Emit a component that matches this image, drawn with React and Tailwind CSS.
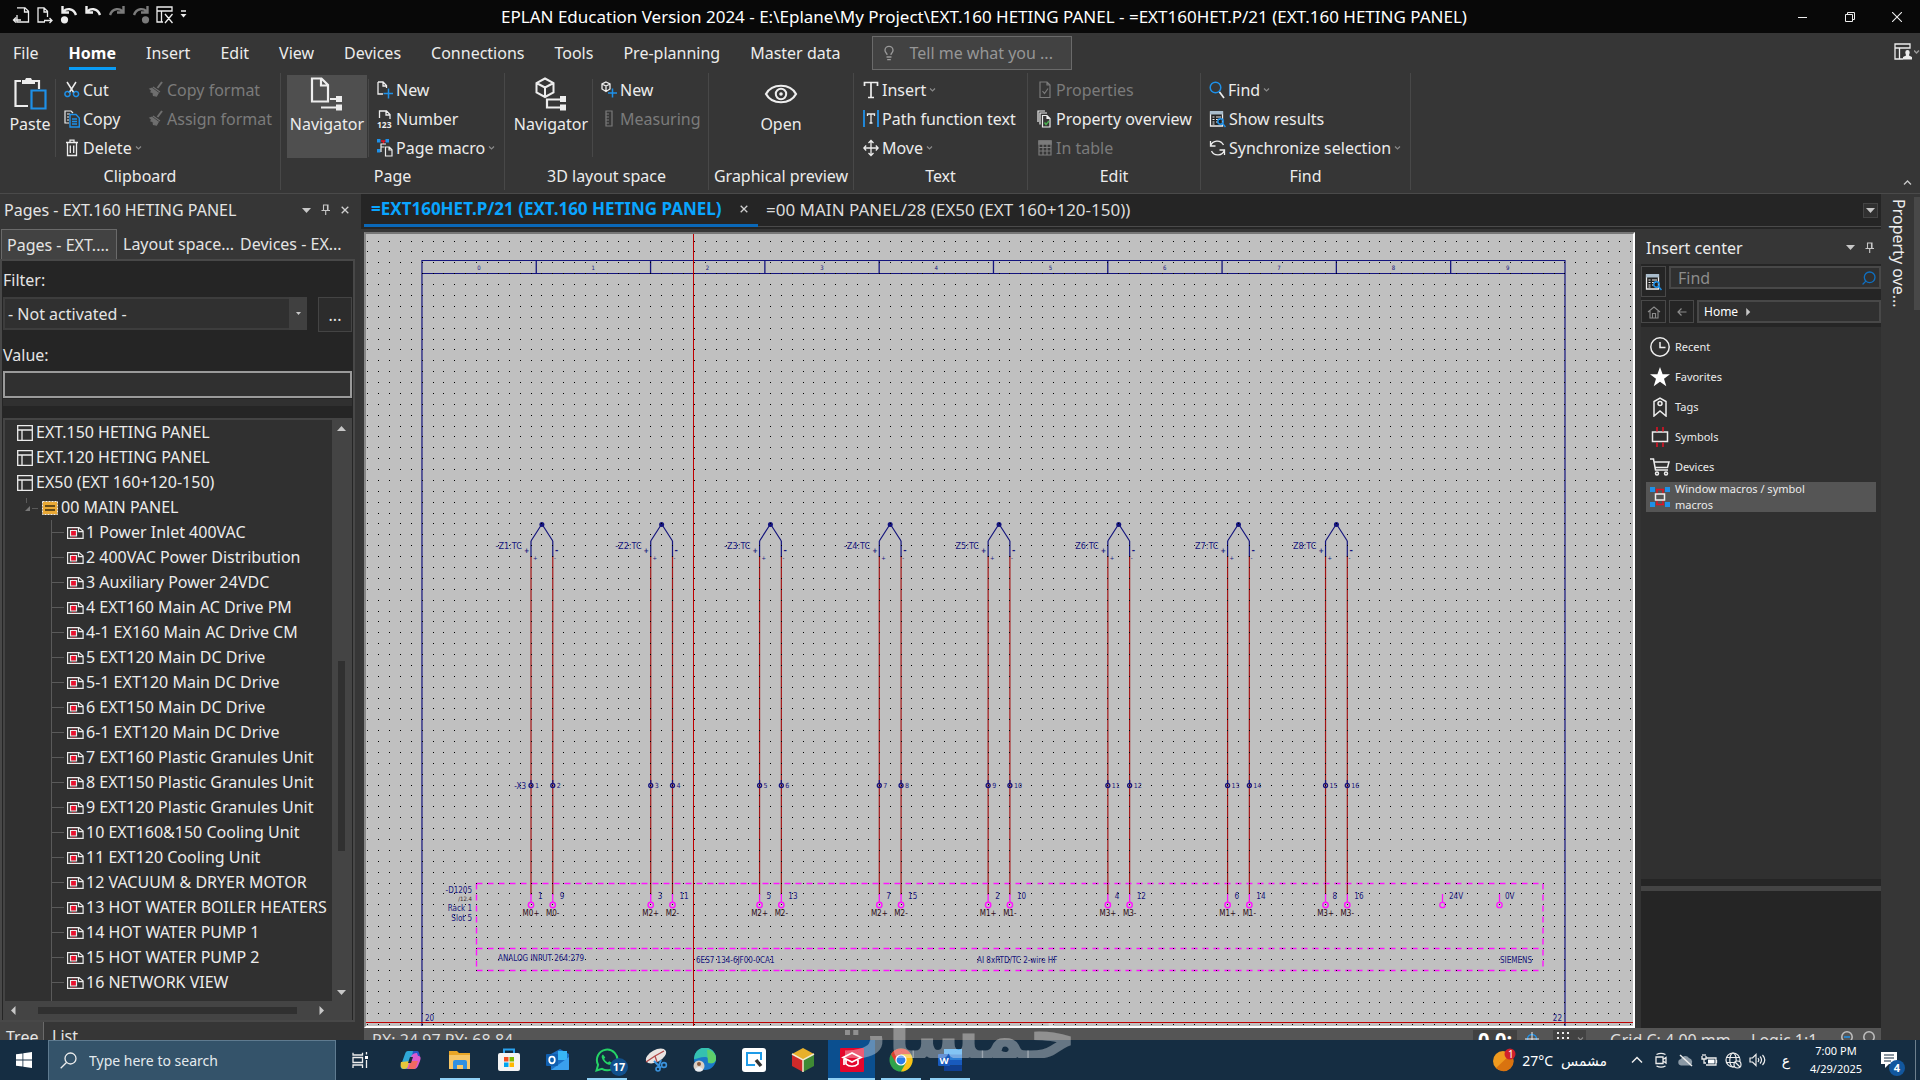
import React from "react";
import { LuLightbulb, LuSearch } from "react-icons/lu";

const FONT = "font-['Noto_Sans','Segoe_UI',sans-serif]";

/* ---------- icons ---------- */

function Svg({ w = 20, h = 20, box, children }) {
  return (
    <svg
      width={w}
      height={h}
      viewBox={box || `0 0 ${w} ${h}`}
      fill="none"
      stroke="#ededed"
      strokeWidth="1.5"
      className="shrink-0"
      aria-hidden="true"
    >
      {children}
    </svg>
  );
}

const PageBack = () => (
  <Svg w={18} h={18}>
    <path d="M5 1.8h8l3.5 3.5V16H5V9M12.5 2v4H16M9 14H1.5M4 11.500L1.500 14 4 16.500" strokeWidth="1.3" />
  </Svg>
);
const PageForward = () => (
  <Svg w={18} h={18}>
    <path d="M9 16H2V1.800h6l3.500 3.500V11M8 2v4h4M8 14.500h8M13.500 12l2.500 2.500-2.500 2.500" strokeWidth="1.3" />
  </Svg>
);
const Undo = ({ dim, flip, dot }) => (
  <Svg w={18} h={18}>
    <g transform={flip ? "translate(18 0) scale(-1 1)" : undefined} stroke={dim ? "#7b7b7b" : "#ededed"}>
      <path d="M2.500 0v6.500h6.500M3 6C6 2 13.500 1.500 16 9" strokeWidth="2.400" />
      {dot && <circle cx="4.500" cy="13.800" r="3.600" fill={dim ? "#7b7b7b" : "#ededed"} stroke="none" />}
    </g>
  </Svg>
);
const LayoutX = () => (
  <Svg w={18} h={18}>
    <path d="M1 1h15v4H1zM1 5v11h6M5.500 5v11M9 8l7.500 9M16.500 8L9 17" strokeWidth="1.3" />
  </Svg>
);
const LayoutUser = () => (
  <Svg w={20} h={18}>
    <path d="M1 1h15v4H1zM1 5v11h8M5.500 5v11" strokeWidth="1.3" />
    <path d="M13.500 7a2.200 2.200 0 012.200 2.200c0 1.500-.7 2-.7 3.300l3 1.500v2.500H9V14l3-1.500c0-1.300-.7-1.800-.7-3.300A2.200 2.200 0 0113.500 7z" fill="#ededed" stroke="none" />
  </Svg>
);
const Paste = () => (
  <Svg w={34} h={34}>
    <path d="M8 4H2.500v25H15M22 4h4v8" strokeWidth="2.200" />
    <path d="M9 3h3l1-2h5l1 2h3v4H9z" fill="#ededed" stroke="none" />
    <path d="M18.500 13.500h14v18h-14z" stroke="#1e90e8" strokeWidth="2.200" />
  </Svg>
);
const Cut = () => (
  <Svg w={16} h={18}>
    <path d="M3 1l7 11M12 1L5 12" />
    <path d="M6 12.500a2.500 2.500 0 11-5 1 2.500 2.500 0 015-1zM9.500 12.500a2.500 2.500 0 105 1 2.500 2.500 0 00-5-1z" stroke="#1e90e8" />
  </Svg>
);
const Copy = () => (
  <Svg w={16} h={18}>
    <path d="M5 13H1V1h6l2 2M3 4h3M3 7h2M3 10h2" strokeWidth="1.200" />
    <path d="M6 4.500h6L15.300 8v9H6zM8 9h5M8 11.500h5M8 14h5" stroke="#1e90e8" strokeWidth="1.400" />
  </Svg>
);
const Trash = () => (
  <Svg w={16} h={18}>
    <path d="M2 3.500h12M6 3V1.200h4V3M3.500 4v12.500h9V4M6.300 6.500v7.500M9.700 6.500v7.500" strokeWidth="1.300" />
  </Svg>
);
const Brush = () => (
  <Svg w={16} h={18}>
    <path d="M14 1L9.500 7" stroke="#6f6f6f" strokeWidth="2" />
    <path d="M5 6l7 5M4.500 7L2 8l1.500 1-.5 2 2 .5.500 3 3 .5 2-3.500" fill="#6f6f6f" stroke="#6f6f6f" strokeWidth="1.200" />
  </Svg>
);
const PageNavigator = () => (
  <Svg w={34} h={34}>
    <path d="M2 1.500h9.500L18 8v16.500H2zM11 2v6.500h7" strokeWidth="2.200" />
    <path d="M20 22h8M11 30.500h17" strokeWidth="2.200" />
    <path d="M26 19h6v6h-6zM26 27.500h6v6h-6z" fill="#ededed" stroke="none" />
  </Svg>
);
const CubeNavigator = () => (
  <Svg w={34} h={34}>
    <path d="M11 1.500l8.500 4.500v9.500L11 20l-8.500-4.500V6zM2.500 6l8.500 4.500L19.500 6M11 10.500V20" strokeWidth="2" />
    <path d="M27 22.500H13v8h14" strokeWidth="2.200" />
    <path d="M26 19h6v6h-6zM26 27.500h6v6h-6z" fill="#ededed" stroke="none" />
  </Svg>
);
const PageNew = () => (
  <Svg w={16} h={18}>
    <path d="M1 1h5l3.500 3.500V7M6 1v4h3M1 1v12h5" strokeWidth="1.300" />
    <path d="M11.500 7.500v10M6.500 12.500h10" stroke="#1e90e8" />
  </Svg>
);
const PageNumber = () => (
  <Svg w={16} h={18}>
    <path d="M2.500 8V1h7L13 4.500V9M9 1v4h4" strokeWidth="1.300" />
    <text x="0" y="17.500" fontSize="8.500" fontWeight="700" fill="#ededed" stroke="none">123</text>
  </Svg>
);
const PageMacro = () => (
  <Svg w={16} h={18}>
    <path d="M4 2h5M6.500 2v3" stroke="#e81123" />
    <path d="M0 0h3.500v3.500H0zM8.500 0H12v3.500H8.500zM0 10h3.500v3.500H0z" fill="#1e90e8" stroke="none" />
    <path d="M4 13V5h5M4.500 8h3M8.500 8h3.800L15 10.700V17H8.500zM12 8v3h3" strokeWidth="1.200" />
  </Svg>
);
const CubeNew = () => (
  <Svg w={16} h={18}>
    <path d="M5 1l4 2v5L5 10.500 1 8V3zM1 3l4 2 4-2M5 5v5" strokeWidth="1.300" />
    <path d="M11.500 7.500v9M7 12h9" stroke="#1e90e8" />
  </Svg>
);
const Ruler = () => (
  <Svg w={16} h={18}>
    <path d="M5 1h6v15H5zM5 4h3M5 7h3M5 10h3M5 13h3" stroke="#7b7b7b" strokeWidth="1.200" />
  </Svg>
);
const Eye = () => (
  <Svg w={34} h={34}>
    <path d="M2 17C8 6 26 6 32 17 26 28 8 28 2 17z" strokeWidth="2.200" />
    <circle cx="17" cy="17" r="5.200" strokeWidth="2" />
    <circle cx="17" cy="17" r="1.800" fill="#ededed" stroke="none" />
  </Svg>
);
const TextT = () => (
  <Svg w={16} h={18}>
    <path d="M1.500 5V1.500h13V5M8 1.500v15M5 16.500h6" strokeWidth="1.700" />
  </Svg>
);
const PathText = () => (
  <Svg w={16} h={18}>
    <path d="M1 0v17M15 0v17" stroke="#1e90e8" strokeWidth="1.800" />
    <path d="M4.500 6V4h7v2M8 4v9M6.500 13h3" strokeWidth="1.300" />
  </Svg>
);
const Move = () => (
  <Svg w={16} h={18}>
    <path d="M8 1.500v15M.8 9h14.400M5.500 4L8 1.500 10.500 4M5.500 14L8 16.500l2.500-2.500M3.200 6.500L.8 9l2.400 2.500M12.800 6.500L15.200 9l-2.400 2.500" strokeWidth="1.300" />
  </Svg>
);
const PageCheck = () => (
  <Svg w={16} h={18}>
    <path d="M3 1h7l3 3v12.500H3zM10 1v3h3M5.500 10l2 2.500 3.500-5" stroke="#7b7b7b" strokeWidth="1.200" />
  </Svg>
);
const PagesCheck = () => (
  <Svg w={16} h={18}>
    <path d="M1 12V1h7M3 14.500V3h7M5.500 5.500h4.500l3 3V17H5.500zM10 5.500v3h3" strokeWidth="1.200" />
    <path d="M7.500 12.500l1.500 2 3-3.500" stroke="#4caf50" />
  </Svg>
);
const TableIcon = () => (
  <Svg w={16} h={18}>
    <path d="M2 2h12v14H2zM2 8.500h12M2 12h12M6 4v12M10 4v12" stroke="#7b7b7b" strokeWidth="1.200" />
    <path d="M2 2h12v3H2z" fill="#7b7b7b" stroke="#7b7b7b" />
  </Svg>
);
const FindIcon = () => (
  <Svg w={16} h={18}>
    <circle cx="6.500" cy="6.500" r="5.300" stroke="#1e90e8" />
    <path d="M10.500 11l4.500 6" strokeWidth="1.700" />
  </Svg>
);
const Results = () => (
  <Svg w={17} h={18}>
    <path d="M1.500 2h12v14h-12z" fill="#222" strokeWidth="1.300" />
    <path d="M1 1h13v3.500H1z" fill="#a9bccb" stroke="none" />
    <path d="M3.500 7h2M7 7h5M3.500 9.500h2M7 9.500h4M3.500 12h2M7 12h2M3.500 14h2" strokeWidth="1.200" />
    <circle cx="11.500" cy="11.500" r="2.700" stroke="#1e90e8" />
    <path d="M13.500 13.500l3 3.500" stroke="#1e90e8" />
  </Svg>
);
const Sync = () => (
  <Svg w={17} h={18}>
    <path d="M1.500 7A7 7 0 0114.500 6M1.500 2v5h5M15.500 11A7 7 0 012.500 12M15.500 16v-5h-5" strokeWidth="1.300" />
  </Svg>
);
const PinIcon = () => (
  <Svg w={10} h={12}>
    <path d="M2.500 1h4.500v5.500H2.500zM6.500 1v5M.5 6.500h8.500M4.700 7v4" stroke="#c8c8c8" strokeWidth="1.100" />
  </Svg>
);
const CloseX = ({ size = 8 }) => (
  <Svg w={size} h={size} box="0 0 8 8">
    <path d="M.7.7l6.600 6.600M7.300.7L.7 7.300" stroke="#d0d0d0" strokeWidth="1.300" />
  </Svg>
);
const Triangle = ({ dir = "down", size = 9 }) => {
  const d = { down: "M0 2h9L4.500 7z", up: "M0 7h9L4.500 2z", left: "M6.500 0v9L2 4.500z", right: "M2.500 0v9L7 4.500z" }[dir];
  return (
    <Svg w={size} h={size} box="0 0 9 9">
      <path d={d} fill="#c8c8c8" stroke="none" />
    </Svg>
  );
};
const Caret = () => (
  <Svg w={8} h={6}>
    <path d="M1 1.500l2.500 2.500L6 1.500" stroke="#8a8a8a" strokeWidth="1.200" />
  </Svg>
);

/* ---------- title bar and ribbon ---------- */

function TitleBar() {
  return (
    <header className="flex h-[33px] shrink-0 items-center bg-[#080808] pl-3 text-white">
      <div className="flex flex-1 items-center gap-1.5 pb-1">
        <button aria-label="Previous page"><PageBack /></button>
        <button aria-label="Next page"><PageForward /></button>
        <button aria-label="Undo list"><Undo dot /></button>
        <button aria-label="Undo"><Undo /></button>
        <button aria-label="Redo"><Undo dim flip /></button>
        <button aria-label="Redo list"><Undo dim flip dot /></button>
        <button aria-label="Close layout"><LayoutX /></button>
        <button aria-label="Customize toolbar">
          <Svg w={7} h={9}><path d="M1 1h5" /><path d="M.5 4h6l-3 3.500z" fill="#ededed" stroke="none" /></Svg>
        </button>
      </div>
      <h1 className="ml-9 text-[17px] leading-6 whitespace-nowrap">
        EPLAN Education Version 2024 - E:\Eplane\My Project\EXT.160 HETING PANEL - =EXT160HET.P/21 (EXT.160 HETING PANEL)
      </h1>
      <div className="flex flex-1 justify-end">
        <button aria-label="Minimize" className="flex w-[47px] justify-center">
          <Svg w={10} h={10}><path d="M0 5.500h9" strokeWidth="1" /></Svg>
        </button>
        <button aria-label="Restore" className="flex w-[47px] justify-center">
          <Svg w={10} h={10}><path d="M.5 2.500h7v7h-7zM2.500 2.500v-2h7v7h-2" strokeWidth="1" /></Svg>
        </button>
        <button aria-label="Close" className="flex w-[47px] justify-center">
          <Svg w={10} h={10}><path d="M0 0l10 10M10 0L0 10" strokeWidth="1.100" /></Svg>
        </button>
      </div>
    </header>
  );
}

const MENU = ["File", "Home", "Insert", "Edit", "View", "Devices", "Connections", "Tools", "Pre-planning", "Master data"];

function MenuRow() {
  return (
    <div className="flex h-10 items-start justify-between">
      <nav className="flex h-[37px] gap-[30px] pl-[13px]">
        {MENU.map((m) => (
          <a
            key={m}
            href="#"
            className={
              m === "Home"
                ? "border-b-[3px] border-[#0a9cf5] pt-2 text-base leading-6 font-bold whitespace-nowrap text-white"
                : "pt-2 text-base leading-6 whitespace-nowrap"
            }
          >
            {m}
          </a>
        ))}
        <label className="mt-[3px] ml-0.5 flex h-[34px] w-[200px] items-center gap-3 border border-[#6a6a6a] bg-[#424242] pl-2">
          <LuLightbulb className="size-4 shrink-0 text-[#9a9a9a]" aria-hidden="true" />
          <input
            aria-label="Tell me what you want"
            placeholder="Tell me what you ..."
            className="min-w-0 flex-1 bg-transparent text-base outline-none placeholder:text-[#969696]"
          />
        </label>
      </nav>
      <button className="mt-2.5 flex items-center" aria-label="Workspace">
        <LayoutUser />
        <Svg w={6} h={6}><path d="M0 1.500l2.500 2.500L5 1.500" stroke="#999" /></Svg>
      </button>
    </div>
  );
}

function Cmd({ icon, label, dim, menu }) {
  return (
    <button className={`flex h-[29px] items-center gap-[3px] text-base whitespace-nowrap ${dim ? "text-[#7b7b7b]" : ""}`} disabled={dim}>
      {icon}
      {label}
      {menu && <Caret />}
    </button>
  );
}

function Big({ icon, label, active, width = "w-20" }) {
  return (
    <button className={`flex h-[83px] flex-col items-center ${width} ${active ? "bg-[#4f4f4f]" : ""}`}>
      <span className="mt-0.5">{icon}</span>
      <span className="text-base leading-[26px]">{label}</span>
    </button>
  );
}

function Group({ label, width, children }) {
  return (
    <section className={`flex h-[117px] shrink-0 flex-col border-r border-[#484848] ${width}`}>
      <div className="flex h-[89px] pt-0.5">{children}</div>
      <h2 className="text-center text-base leading-7 whitespace-nowrap">{label}</h2>
    </section>
  );
}

const Rule = () => <span className="mt-1 h-[78px] w-px shrink-0 bg-[#484848]" />;

function Ribbon() {
  return (
    <div className="flex h-[161px] shrink-0 flex-col border-b border-[#4a4a4a] bg-[#363636] text-[#ececec]">
      <MenuRow />
      <div className="flex">
        <Group label="Clipboard" width="w-[281px]">
          <div className="flex w-[55px] justify-end"><Big icon={<Paste />} label="Paste" width="w-[50px]" /></div>
          <Rule />
          <div className="ml-2 w-[84px]">
            <Cmd icon={<Cut />} label="Cut" />
            <Cmd icon={<Copy />} label="Copy" />
            <Cmd icon={<Trash />} label="Delete" menu />
          </div>
          <div>
            <Cmd icon={<Brush />} label="Copy format" dim />
            <Cmd icon={<Brush />} label="Assign format" dim />
          </div>
        </Group>
        <Group label="Page" width="w-[224px]">
          <div className="pl-1.5"><Big icon={<PageNavigator />} label="Navigator" active /></div>
          <span className="w-px" />
          <Rule />
          <div className="ml-2">
            <Cmd icon={<PageNew />} label="New" />
            <Cmd icon={<PageNumber />} label="Number" />
            <Cmd icon={<PageMacro />} label="Page macro" menu />
          </div>
        </Group>
        <Group label="3D layout space" width="w-[204px]">
          <div className="pl-1.5"><Big icon={<CubeNavigator />} label="Navigator" /></div>
          <span className="w-px" />
          <Rule />
          <div className="ml-2">
            <Cmd icon={<CubeNew />} label="New" />
            <Cmd icon={<Ruler />} label="Measuring" dim />
          </div>
        </Group>
        <Group label="Graphical preview" width="w-[145px]">
          <div className="flex flex-1 justify-center"><Big icon={<Eye />} label="Open" /></div>
        </Group>
        <Group label="Text" width="w-[174px]">
          <div className="ml-[9px]">
            <Cmd icon={<TextT />} label="Insert" menu />
            <Cmd icon={<PathText />} label="Path function text" />
            <Cmd icon={<Move />} label="Move" menu />
          </div>
        </Group>
        <Group label="Edit" width="w-[173px]">
          <div className="ml-[9px]">
            <Cmd icon={<PageCheck />} label="Properties" dim />
            <Cmd icon={<PagesCheck />} label="Property overview" />
            <Cmd icon={<TableIcon />} label="In table" dim />
          </div>
        </Group>
        <Group label="Find" width="w-[210px]">
          <div className="ml-2">
            <Cmd icon={<FindIcon />} label="Find" menu />
            <Cmd icon={<Results />} label="Show results" />
            <Cmd icon={<Sync />} label="Synchronize selection" menu />
          </div>
        </Group>
        <button className="mt-auto mr-2 mb-1 ml-auto" aria-label="Collapse ribbon">
          <Svg w={9} h={7}><path d="M1 5.500L4.500 2 8 5.500" stroke="#c8c8c8" strokeWidth="1.300" /></Svg>
        </button>
      </div>
    </div>
  );
}

/* ---------- pages navigator ---------- */

const PROJECTS = ["EXT.150 HETING PANEL", "EXT.120 HETING PANEL", "EX50 (EXT 160+120-150)"];
const PAGES = [
  "1 Power Inlet 400VAC",
  "2 400VAC Power Distribution",
  "3 Auxiliary Power 24VDC",
  "4 EXT160 Main AC Drive PM",
  "4-1 EX160 Main AC Drive CM",
  "5 EXT120 Main DC Drive",
  "5-1 EXT120 Main DC Drive",
  "6 EXT150 Main DC Drive",
  "6-1 EXT120 Main DC Drive",
  "7 EXT160 Plastic Granules Unit",
  "8 EXT150 Plastic Granules Unit",
  "9 EXT120 Plastic Granules Unit",
  "10 EXT160&150 Cooling Unit",
  "11 EXT120 Cooling Unit",
  "12 VACUUM & DRYER MOTOR",
  "13 HOT WATER BOILER HEATERS",
  "14 HOT WATER PUMP 1",
  "15 HOT WATER PUMP 2",
  "16 NETWORK VIEW",
];

const ProjectIcon = () => (
  <Svg w={16} h={16}>
    <path d="M.7.7h14.600v14.600H.7zM.7 5h14.600M5 5v10" strokeWidth="1.300" />
  </Svg>
);
const PlantIcon = () => (
  <Svg w={16} h={14}>
    <path d="M.5.500h15v13H.5z" fill="#eaa935" strokeWidth="1" strokeDasharray="2 1" />
    <path d="M3 5h10M3 9h10" stroke="#3a2c10" strokeWidth="1.300" />
  </Svg>
);
const SchematicIcon = () => (
  <Svg w={17} h={12}>
    <path d="M.6.600h11.500l4 3.500v7.300H.6zM11.500.6v4h4.500" strokeWidth="1.200" />
    <path d="M3.500 3.500h6v5.500h-6z" fill="#e8112d" strokeWidth="1.200" />
    <path d="M5.500 1.500v1M8 1.500v1M5.500 10v1M8 10v1" stroke="#e8112d" strokeWidth="1" />
  </Svg>
);

function PageTree() {
  return (
    <div className="flex min-h-0 flex-1 flex-col border-2 border-b-0 border-[#444] bg-[#444]">
      <div className="flex min-h-0 flex-1">
        <ul className="min-w-0 flex-1 overflow-hidden bg-[#303030] text-base leading-[25px] whitespace-nowrap text-[#ececec]">
          {PROJECTS.map((p) => (
            <li key={p} className="flex h-[25px] items-center gap-[3px] pl-3"><ProjectIcon />{p}</li>
          ))}
          <li>
            <div className="flex h-[25px] items-center gap-[3px] pl-5">
              <Svg w={14} h={20}>
                <path d="M1.500 0v5M7 10.500h6" stroke="#5a5a5a" strokeWidth="1" />
                <path d="M5 8v5H0z" fill="#777" stroke="none" />
              </Svg>
              <PlantIcon />00 MAIN PANEL
            </div>
            <ul className="ml-[46px] border-l border-[#5a5a5a]">
              {PAGES.map((p) => (
                <li key={p} className="flex h-[25px] items-center gap-0.5">
                  <span className="mr-px h-px w-3 shrink-0 bg-[#5a5a5a]" />
                  <SchematicIcon />{p}
                </li>
              ))}
              <li className="h-[25px] pl-[122px]">¨</li>
            </ul>
          </li>
        </ul>
        <div className="flex w-[18px] shrink-0 flex-col items-center py-1">
          <Triangle dir="up" />
          <div className="min-h-0 flex-[229]" />
          <div className="min-h-0 w-[7px] flex-[191] bg-[#303030]" />
          <div className="min-h-0 flex-[137]" />
          <Triangle />
        </div>
      </div>
      <div className="flex h-[19px] shrink-0 items-center gap-5 px-1">
        <Triangle dir="left" />
        <div className="h-[7px] flex-1 bg-[#303030]" />
        <span className="pr-5"><Triangle dir="right" /></span>
      </div>
    </div>
  );
}

function PagesPanel() {
  return (
    <aside className="flex w-[361px] shrink-0 flex-col bg-[#363636] pr-1.5 text-base text-[#e4e4e4]">
      <div className="flex h-[35px] shrink-0 items-center justify-between pr-1.5 pb-[3px] pl-1">
        <h2>Pages - EXT.160 HETING PANEL</h2>
        <div className="flex items-center gap-2.5">
          <button aria-label="Panel menu"><Triangle /></button>
          <button aria-label="Pin panel"><PinIcon /></button>
          <button aria-label="Close panel"><CloseX /></button>
        </div>
      </div>
      <div className="flex h-[30px] shrink-0 items-center whitespace-nowrap">
        <button className="ml-px h-[30px] w-[116px] border border-b-0 border-[#6a6a6a] bg-[#424242] pl-[5px] text-left">Pages - EXT....</button>
        <button className="w-[117px] pl-1.5 text-left">Layout space...</button>
        <button className="w-[116px] pl-1.5 text-left">Devices - EX...</button>
      </div>
      <div className="flex min-h-0 flex-1 flex-col border-2 border-[#484848] bg-[#252525] px-px">
        <label htmlFor="filter" className="mt-[5px] mb-0.5 h-[29px] leading-[29px]">Filter:</label>
        <div className="flex justify-between">
          <div className="relative h-[33px] w-[304px]">
            <select id="filter" className="h-full w-full appearance-none border-2 border-[#3d3d3d] bg-[#303030] pl-[3px] outline-none">
              <option>- Not activated -</option>
            </select>
            <span className="pointer-events-none absolute inset-y-0 right-0 flex w-[18px] items-center justify-center bg-[#404040]"><Triangle size={5} /></span>
          </div>
          <button className="h-[35px] w-[34px] border border-[#444] bg-[#2c2c2c]" aria-label="Edit filter">...</button>
        </div>
        <label htmlFor="value" className="mt-2 h-[31px] leading-[31px]">Value:</label>
        <input id="value" className="h-[27px] w-full shrink-0 border-2 border-[#9a9a9a] bg-[#303030] outline-none" />
        <div className="mt-px mb-3 h-[7px] shrink-0 bg-[#303030]" />
        <PageTree />
      </div>
      <div className="flex h-[18px] shrink-0 items-start overflow-hidden leading-7">
        <button className="-mt-px h-8 w-11 border-r border-[#6a6a6a] bg-[#444] pl-1.5 text-left leading-8">Tree</button>
        <button className="pl-2">List</button>
      </div>
    </aside>
  );
}

/* ---------- schematic ---------- */

const GRID = 10.884;
const X0 = 1.75;
const Y0 = 7.1;
const gx = (n) => X0 + n * GRID;

// one path for the whole dot grid, snapped to device pixels
const DOTS = (() => {
  let d = "";
  for (let r = 0; r < 110; r++)
    for (let c = 0; c < 240; c++) d += `M${Math.floor(X0 + c * GRID)} ${Math.floor(Y0 + r * 10.88)}h1v1h-1z`;
  return d;
})();

const SENSORS = [
  { at: 16, name: "-Z1:TC", t: [1, 2], p: [1, 9], m: "M0" },
  { at: 27, name: "-Z2:TC", t: [3, 4], p: [3, 11], m: "M2" },
  { at: 37, name: "-Z3:TC", t: [5, 6], p: [5, 13], m: "M2" },
  { at: 48, name: "-Z4:TC", t: [7, 8], p: [7, 15], m: "M2" },
  { at: 58, name: "Z5:TC", t: [9, 10], p: [2, 10], m: "M1" },
  { at: 69, name: "Z6:TC", t: [11, 12], p: [4, 12], m: "M3" },
  { at: 80, name: "Z7:TC", t: [13, 14], p: [6, 14], m: "M1" },
  { at: 89, name: "Z8:TC", t: [15, 16], p: [8, 16], m: "M3" },
];

function Wire({ x, t, p, m }) {
  return (
    <g>
      <path d={`M${x} 322V661`} stroke="#a31515" strokeWidth="1.200" />
      <path d={`M${x} 307V323M${x} 546V549`} stroke="#14147d" strokeWidth="1.200" />
      <circle cx={x} cy="551.500" r="2" fill="none" stroke="#14147d" strokeWidth="1.300" />
      <text x={x + 4} y="554" fontSize="7">{t}</text>
      <path d={`M${x} 660V668`} stroke="#ff14ff" strokeWidth="1.300" />
      <circle cx={x} cy="671" r="2.700" fill="none" stroke="#ff14ff" strokeWidth="1.400" />
      <text x={x + 7} y="665">{p}</text>
      <text x={x} y="682" textAnchor="middle" fill="#2e0a14">{m}</text>
    </g>
  );
}

function Sensor({ at, name, t, p, m }) {
  const x = gx(at);
  return (
    <g>
      <circle cx={x} cy="290.500" r="2.500" fill="#14147d" />
      <path d={`M${x - GRID} 307L${x} 290L${x + GRID} 307`} fill="none" stroke="#14147d" strokeWidth="1.200" />
      <text x={x - 20} y="315" fontSize="9" textAnchor="end">{name}</text>
      <text x={x - 18} y="319" fontSize="7" fontWeight="700">+</text>
      <text x={x - 9} y="326" fontSize="6">+</text>
      <text x={x + 13} y="319" fontSize="9" fontWeight="700">-</text>
      <text x={x + 12} y="326" fontSize="6">-</text>
      <Wire x={x - GRID} t={t[0]} p={p[0]} m={`${m}+`} />
      <Wire x={x + GRID} t={t[1]} p={p[1]} m={`${m}-`} />
    </g>
  );
}

function Schematic() {
  const left = gx(5) - 0.2;
  const right = 1199;
  return (
    <svg
      className="block h-full w-full font-['DejaVu_Sans_Condensed','DejaVu_Sans',sans-serif]"
      fill="none"
      role="img"
      aria-label="Schematic page 21"
    >
      <path d={`M${left} 792V26.500H${right}V792M${left} 39.500H${right}`} stroke="#14147d" strokeWidth="1.200" />
      {Array.from({ length: 10 }, (_, i) => (
        <g key={i}>
          {i > 0 && <path d={`M${left + i * 114.3} 26V40`} stroke="#14147d" strokeWidth="1.300" />}
          <text x={left + i * 114.3 + 57} y="36" fontSize="6" fill="#14147d" textAnchor="middle">{i}</text>
        </g>
      ))}
      <g fontSize="8" fill="#14147d">
        {SENSORS.map((s) => <Sensor key={s.at} {...s} />)}
        <text x="160" y="555" textAnchor="end">-X3</text>
        <text x="106" y="659" textAnchor="end">-D1205</text>
        <text x="106" y="667" textAnchor="end" fontSize="6" fill="#3a2a2a">/12.4</text>
        <text x="106" y="677" textAnchor="end">Rack 1</text>
        <text x="106" y="687" textAnchor="end">Slot 5</text>
        <text x="132" y="727">ANALOG INPUT 264:279</text>
        <text x="330" y="729">6ES7 134-6JF00-0CA1</text>
        <text x="611" y="729">AI 8xRTD/TC 2-wire HF</text>
        <text x="1166" y="729" textAnchor="end">SIEMENS</text>
        <text x="59" y="787">20</text>
        <text x="1196" y="787" textAnchor="end">22</text>
        <text x="1083" y="665">24V</text>
        <text x="1139" y="665">0V</text>
      </g>
      <g stroke="#ff14ff" strokeWidth="1.300">
        <path d="M1076.500 660V668M1133.500 660V668" />
        <circle cx="1076.500" cy="671" r="2.700" />
        <circle cx="1133.500" cy="671" r="2.700" />
        <path d="M110.500 649.500H1177M110.500 714.500H1177M110.500 736.500H1177M110.500 649.500V736.500M1177 649.500V736.500" strokeWidth="1.400" strokeDasharray="6 5" />
      </g>
      <path d={DOTS} fill="#000" shapeRendering="crispEdges" />
      <path d="M327.500 0V792M0 788.500H4000" stroke="#bf0000" />
    </svg>
  );
}

function Editor() {
  return (
    <main className="flex min-w-0 flex-1 flex-col pl-[3px]">
      <div className="min-h-0 flex-1 border-2 border-t-[#777] border-r-white border-b-white border-l-[#888] bg-[#c0c0c0]">
        <Schematic />
      </div>
    </main>
  );
}

/* ---------- insert center ---------- */

const MacroIcon = () => (
  <Svg w={20} h={20}>
    <path d="M6 2.500h8M6 17.500h8M7 3v4M13 3v4M7 13v4M13 13v4" stroke="#e81123" strokeWidth="1.300" />
    <path d="M5.500 7h9v6h-9z" />
    <path d="M0 0h5v5H0zM15 0h5v5h-5zM0 15h5v5H0zM15 15h5v5h-5z" fill="#1e90e8" stroke="none" />
  </Svg>
);

const CENTER_ITEMS = [
  { label: "Recent", icon: <Svg><circle cx="10" cy="10" r="9.200" /><path d="M10 5v5.500h5.500" /></Svg> },
  { label: "Favorites", icon: <Svg><path d="M10 0l2.600 7.200H20l-6 4.500 2.300 7.600L10 14.800l-6.300 4.500L6 11.700 0 7.200h7.400z" fill="#fff" stroke="none" /></Svg> },
  { label: "Tags", icon: <Svg><path d="M4 19V4.500L10 1l6 3.500V19l-6-5z" /><circle cx="10" cy="6.500" r="2" /></Svg> },
  { label: "Symbols", icon: <Svg><path d="M2.500 5h15v9.500h-15z" /><path d="M7 0v4.500M13 0v4.500M7 15.500V20M13 15.500V20" stroke="#e81123" /></Svg> },
  { label: "Devices", icon: <Svg><path d="M0 2h3.500l2 11H18M4 5h15l-1.500 5.500H5.500" /><circle cx="7" cy="16.500" r="1.500" /><circle cx="16" cy="16.500" r="1.500" /></Svg> },
];

function InsertCenter() {
  return (
    <aside className="flex w-[246px] shrink-0 flex-col bg-[#252525] text-[#ececec]">
      <div className="flex h-[35px] shrink-0 items-center justify-between bg-[#363636] pt-0.5 pr-1.5 pl-[11px]">
        <h2 className="text-base">Insert center</h2>
        <div className="flex items-center gap-2.5">
          <button aria-label="Panel menu"><Triangle /></button>
          <button aria-label="Pin panel"><PinIcon /></button>
        </div>
      </div>
      <div className="flex min-h-0 flex-1 flex-col border-l-[6px] border-[#333]">
        <div className="mt-0.5 flex h-[31px] shrink-0 gap-[3px]">
          <button className="flex w-[25px] shrink-0 items-center justify-center border border-[#484848]" aria-label="Search settings"><Results /></button>
          <label className="flex h-[23px] min-w-0 flex-1 items-center border-2 border-[#484848] bg-[#303030] pr-0.5 pl-[7px]">
            <input placeholder="Find" aria-label="Find" className="min-w-0 flex-1 bg-transparent text-base leading-4 outline-none placeholder:text-[#8c8c8c]" />
            <LuSearch className="size-4 shrink-0 -scale-x-100 text-[#0f6fc0]" aria-hidden="true" />
          </label>
        </div>
        <div className="mt-[3px] flex h-[23px] shrink-0 gap-[3px]">
          <button className="flex w-[25px] shrink-0 items-center justify-center border border-[#484848]" aria-label="Home">
            <Svg w={14} h={14}><path d="M1 7l6-5 6 5M3 6v7h8V6M5.500 13V8.500h3V13" stroke="#8c8c8c" strokeWidth="1.100" /></Svg>
          </button>
          <button className="flex w-[25px] shrink-0 items-center justify-center border border-[#484848]" aria-label="Back">
            <Svg w={10} h={10}><path d="M9.500 5H1M4.500 1.500L1 5l3.500 3.500" stroke="#8c8c8c" strokeWidth="1.200" /></Svg>
          </button>
          <div className="flex flex-1 items-center gap-1.5 border-2 border-[#484848] bg-[#303030] pl-[5px] text-[12px] text-white">
            Home <Triangle dir="right" size={8} />
          </div>
        </div>
        <div className="mt-1 flex min-h-0 flex-1 flex-col bg-[#303030] px-[5px] pt-[5px]">
          {CENTER_ITEMS.map((it) => (
            <button key={it.label} className="flex h-[30px] shrink-0 items-center gap-[5px] pl-1 text-[11px]">{it.icon}{it.label}</button>
          ))}
          <button className="flex h-[30px] shrink-0 items-center gap-[5px] bg-[#555] pl-1 text-left text-[11px] leading-4">
            <MacroIcon />
            <span className="w-36">Window macros / symbol macros</span>
          </button>
        </div>
        <div className="mt-[7px] h-[5px] shrink-0 bg-[#444]" />
        <div className="h-[137px] shrink-0" />
      </div>
    </aside>
  );
}

function StatusBar() {
  return (
    <footer className="ml-[3px] flex h-3 shrink-0 items-start justify-between overflow-hidden bg-[#555] pr-1.5 pl-2 text-base text-[#dedede]">
      <span className="leading-6">RX: 24.97 RY: 68.84</span>
      <div className="flex items-start leading-6">
        <button className="mt-0.5 flex h-6 w-11 bg-[#424242] pl-[5px] text-xl leading-5 font-bold text-white" aria-label="Snap to point">0.0:</button>
        <span className="pt-1 pl-2"><Svg w={14} h={14}><circle cx="7" cy="7" r="4.500" stroke="#1e90e8" /><path d="M7 0v14M0 7h14" strokeWidth="1" /></Svg></span>
        <button className="mt-0.5 ml-3.5 flex h-6 w-[33px] gap-2 bg-[#424242] pt-0.5 pl-1" aria-label="Grid">
          <Svg w={12} h={12}><path d="M0 1h12M0 6h12M0 11h12" strokeWidth="2" strokeDasharray="2 3" /></Svg>
          <span className="pt-1"><Caret /></span>
        </button>
        <span className="ml-6 w-[141px]">Grid C: 4.00 mm</span>
        <span className="w-[90px]">Logic 1:1</span>
        <Svg w={12} h={20}><circle cx="6" cy="9" r="5.200" stroke="#c0c0c0" /><path d="M3 9h6" stroke="#1e90e8" /></Svg>
        <span className="ml-2.5"><Svg w={12} h={20}><circle cx="6" cy="9" r="5.200" stroke="#c0c0c0" /></Svg></span>
      </div>
    </footer>
  );
}

function Workspace() {
  return (
    <div className="flex min-w-0 flex-1 flex-col bg-[#363636]">
      <div className="flex h-[33px] shrink-0 items-stretch bg-[#252525] text-[17px] whitespace-nowrap text-[#dcdcdc]">
        <div className="ml-[3px] flex w-[394px] items-center justify-between border-b-[3px] border-[#0a68b8] pr-2.5 pl-[7px]">
          <a href="#" className="font-bold text-[#0aa5ff]">=EXT160HET.P/21 (EXT.160 HETING PANEL)</a>
          <button aria-label="Close tab"><CloseX /></button>
        </div>
        <a href="#" className="flex flex-1 items-center border-b border-[#4a4a4a] pl-2">=00 MAIN PANEL/28 (EX50 (EXT 160+120-150))</a>
        <div className="flex items-center border-b border-[#4a4a4a] pr-[3px]">
          <button className="flex h-[15px] w-[15px] items-center justify-center border border-[#444] bg-[#303030]" aria-label="Open tabs"><Triangle /></button>
        </div>
      </div>
      <div className="h-0.5 shrink-0 bg-[#252525]" />
      <div className="flex min-h-0 flex-1">
        <div className="flex min-w-0 flex-1 flex-col pt-[3px]"><Editor /></div>
        <InsertCenter />
      </div>
      <StatusBar />
    </div>
  );
}

/* ---------- taskbar ---------- */

const TASKS = [
  { name: "Copilot", art: (
    <>
      <path d="M9 3h7l-4 12c-1 4-2 6-6 6H4c-2 0-3-2-2-4L6 6c.6-2 1.500-3 3-3z" fill="#2fa8d8" />
      <path d="M2 14c-1 4 0 7 3 7 4 0 5-3 7-8z" fill="#e8c63a" />
      <path d="M14 3h4c2 0 2 2 3 5h-8z" fill="#2456c8" />
      <path d="M15 21H8l4-12c1-3 3-4 6-4l1 3c3 0 3 2 2 5l-2 5c-1 2-2 3-4 3z" fill="#d95bd0" />
      <path d="M9 21l3-8h7l-2 6c-.6 1-1 2-3 2z" fill="#ef6a62" />
      <path d="M11 9h3l-2 6H9z" fill="#152d42" />
    </>
  ) },
  { name: "File Explorer", open: true, art: (
    <>
      <path d="M1 3h8l2 2h11v16H1z" fill="#e9a626" />
      <path d="M1 7h21v14H1z" fill="#f6c667" />
      <path d="M5 21v-7q0-2 2-2h10q2 0 2 2v7h-4v-4H9v4z" fill="#2f8fe0" />
    </>
  ) },
  { name: "Microsoft Store", art: (
    <>
      <path d="M7 6V1.500h10V6" fill="none" stroke="#2ba3f0" strokeWidth="2" />
      <rect x="1" y="5" width="22" height="18" rx="2" fill="#f4f4f4" />
      <path d="M7 9h4.500v4.500H7z" fill="#f25022" /><path d="M12.500 9H17v4.500h-4.500z" fill="#7fba00" />
      <path d="M7 14.500h4.500V19H7z" fill="#00a4ef" /><path d="M12.500 14.500H17V19h-4.500z" fill="#ffb900" />
    </>
  ) },
  { name: "Outlook", art: (
    <>
      <path d="M5 6l9-5 9 5v16H5z" fill="#1a6fc4" />
      <path d="M12 3h9v9h-9z" fill="#38b6f5" />
      <path d="M5 22L23 9v12q0 1-1 1z" fill="#3aa0ee" />
      <rect x="0" y="6" width="12" height="12" rx="1" fill="#0f5fb0" />
      <ellipse cx="6" cy="12" rx="2.800" ry="3.300" fill="none" stroke="#fff" strokeWidth="1.700" />
    </>
  ) },
  { name: "WhatsApp", open: true, badge: "17", art: (
    <>
      <path d="M1.500 22.500l1.600-5.800A10.300 10.300 0 117 20.800z" fill="none" stroke="#25d366" strokeWidth="2" />
      <path d="M8 6.500c-1 .5-1.600 1.700-1.200 3.200.8 3.200 3.500 6 7 7 1.600.4 3-.3 3.300-1.700l-2.900-1.700-1.300 1.200c-1.800-.7-3-2-3.700-3.700L10.300 9.500z" fill="#25d366" />
    </>
  ) },
  { name: "Snipping Tool", art: (
    <>
      <ellipse cx="12" cy="8" rx="11" ry="6" transform="rotate(-28 12 8)" fill="#e9e4e2" />
      <path d="M2 14l9-6 9-5M11 8l2 6" stroke="#b24a4a" strokeWidth="1.300" fill="none" />
      <path d="M10 13l7 7M17 12l-3 8" stroke="#3b93dd" strokeWidth="2" fill="none" />
      <circle cx="20" cy="17" r="2.400" fill="none" stroke="#3b93dd" strokeWidth="1.600" />
      <circle cx="14" cy="21" r="2" fill="none" stroke="#3b93dd" strokeWidth="1.600" />
    </>
  ) },
  { name: "Edge", art: (
    <>
      <circle cx="12" cy="11" r="11" fill="#1b78c8" />
      <path d="M1 11A11 11 0 0123 10c0 5-4 6-8 5 2-2 1-6-3-6-5 0-8 2-11 2z" fill="#35c1b0" />
      <path d="M14 1.500c6 1 9 5 9 9 0 4-4 6-8 4z" fill="#5fd06a" />
      <circle cx="6" cy="18" r="5.500" fill="#d9cfc4" />
      <circle cx="6" cy="16" r="2" fill="#8a5a3c" />
      <path d="M2 22c1-4 7-4 8 0-2 2-6 2-8 0z" fill="#e8eef4" />
    </>
  ) },
  { name: "Quick Assist", art: (
    <>
      <rect x="0" y="0" width="24" height="24" rx="3" fill="#fff" />
      <path d="M13 17H5V5h14v7" fill="none" stroke="#1e9be8" strokeWidth="2" />
      <path d="M14 12l5 6" stroke="#333" strokeWidth="3.500" />
    </>
  ) },
  { name: "Project cube", art: (
    <>
      <path d="M12 0l11 6-11 6L1 6z" fill="#e8b02c" />
      <path d="M1 6l11 6v12L1 18z" fill="#cf2a2a" />
      <path d="M23 6l-11 6v12l11-6z" fill="#3f8a34" />
      <path d="M12 12v12M1 6l11 6 11-6" stroke="#f3ead2" strokeWidth="1.500" fill="none" />
    </>
  ) },
  { name: "EPLAN Education", open: true, active: true, art: (
    <>
      <rect x="0" y="0" width="24" height="24" rx="1" fill="#e4062c" />
      <path d="M12 5L3 9.500 12 14l9-4.500zM6 12v4c3 3 9 3 12 0v-4M4 9.500V17" fill="none" stroke="#fff" strokeWidth="1.700" />
    </>
  ) },
  { name: "Chrome", open: true, art: (
    <>
      <circle cx="12" cy="12" r="11.500" fill="#2fa34a" />
      <path d="M2 6.200A11.500 11.500 0 0122 6.200H12z" fill="#e33b2e" />
      <path d="M22 6.200A11.500 11.500 0 0112 23.500l5-8.700L12 6.200z" fill="#fbc116" />
      <path d="M2 6.200L7 15l5-8.800z" fill="#e33b2e" />
      <circle cx="12" cy="12" r="5.600" fill="#fff" />
      <circle cx="12" cy="12" r="4.400" fill="#2b7de9" />
    </>
  ) },
  { name: "Word", open: true, art: (
    <>
      <path d="M6 1h18v6H6z" fill="#41a5ee" /><path d="M6 6.500h18v6H6z" fill="#2b7cd3" />
      <path d="M6 12h18v5.500H6z" fill="#185abd" /><path d="M6 17.500h18V23H6z" fill="#103f91" />
      <rect x="0" y="6" width="12" height="12" rx="1" fill="#185abd" />
      <text x="6" y="15.500" textAnchor="middle" fontSize="9.500" fontWeight="700" fill="#fff">W</text>
    </>
  ) },
];

function Taskbar() {
  return (
    <footer className="flex h-10 shrink-0 items-stretch bg-[#152d42] text-white">
      <button className="flex w-12 items-center justify-center" aria-label="Start">
        <Svg w={16} h={16}><path d="M0 2.300L6.500 1.400v6.200H0zM7.300 1.300L16 0v7.600H7.300zM0 8.400h6.500v6.200L0 13.700zM7.300 8.400H16V16l-8.700-1.300z" fill="#fff" stroke="none" /></Svg>
      </button>
      <label className="flex w-[288px] items-center gap-3 border border-b-0 border-[#5f7b90] bg-[#34536a] pl-[11px]">
        <Svg w={17} h={17}><circle cx="10.500" cy="6.500" r="5.500" strokeWidth="1.300" /><path d="M6.500 10.500L.7 16.300" strokeWidth="1.300" /></Svg>
        <input placeholder="Type here to search" aria-label="Type here to search" className="min-w-0 flex-1 bg-transparent text-[14px] outline-none placeholder:text-[#e4eaee]" />
      </label>
      <button className="flex w-[49px] items-center justify-center" aria-label="Task view">
        <Svg w={17} h={16}><path d="M1 3.500V.7M1 .7v2.300h9.500V.7M1 5.500h9.500v5H1zM1 16v-3h9.500v3M14.500 0v2.500M14.500 8v8" strokeWidth="1.300" /><path d="M13 4h3v3h-3z" fill="#fff" stroke="none" /></Svg>
      </button>
      <div className="ml-px flex">
        {TASKS.map((t) => (
          <button key={t.name} aria-label={t.name} className={`relative flex w-[49px] items-center justify-center border-x border-[#152d42] ${t.active ? "bg-[#0b4f8f]" : ""}`}>
            <svg width="24" height="24" viewBox="0 0 24 24" aria-hidden="true">{t.art}</svg>
            {t.badge && (
              <span className="absolute right-0.5 bottom-1 flex size-[18px] items-center justify-center rounded-full bg-[#12508c] text-[11px] font-bold">{t.badge}</span>
            )}
            {t.open && <span className={`absolute bottom-0 h-0.5 bg-[#8fd0f5] ${t.active ? "w-full" : "w-10"}`} />}
          </button>
        ))}
      </div>
      <div className="ml-auto flex items-center">
        <button className="flex items-center text-[14px] whitespace-nowrap" aria-label="Weather">
          <Svg w={24} h={24}>
            <circle cx="11" cy="13" r="10" fill="#ef9a1e" stroke="none" />
            <path d="M4 20A10 10 0 0019 6z" fill="#d9730f" stroke="none" />
            <circle cx="18" cy="6" r="5.500" fill="#d0202c" stroke="none" />
            <text x="16" y="9.500" fontSize="10" fill="#fff" stroke="none">1</text>
          </Svg>
          <span className="ml-1.5">27°C</span>
          <span className="ml-2 w-[46px] text-[14px] font-['Noto_Sans','DejaVu_Sans',sans-serif]" lang="ar">مشمس</span>
        </button>
        <div className="ml-5 flex items-center gap-1">
          <button className="flex w-5 justify-center" aria-label="Show hidden icons"><Svg w={12} h={8}><path d="M1 6.500l5-5 5 5" /></Svg></button>
          <button className="flex w-5 justify-center" aria-label="Meet now"><Svg w={14} h={16}><path d="M2 5h7v6.500H2zM9 7.500l3-2v5.500l-3-2M2.500 2.500c3-1.500 6-1.500 9 0M2.500 14c3 1.500 6 1.500 9 0" strokeWidth="1.300" /></Svg></button>
          <button className="flex w-5 justify-center" aria-label="OneDrive"><Svg w={17} h={13}><path d="M4 11.500a3.300 3.300 0 010-6.500 4.500 4.500 0 018-1 4 4 0 011 7.500z" fill="#8b99a5" stroke="none" /><path d="M3 1l12 11" /></Svg></button>
          <button className="flex w-5 justify-center" aria-label="Battery"><Svg w={17} h={13}><path d="M5 4h10v7H5M15.500 6v3M1 2v3h4V2M2 0v2M4 0v2M3 5v4h2" strokeWidth="1.300" /><path d="M7 5.500h6.500v4H7z" fill="#fff" stroke="none" /></Svg></button>
          <button className="flex w-5 justify-center" aria-label="Network"><Svg w={17} h={17}><circle cx="8" cy="8" r="7" strokeWidth="1.200" /><ellipse cx="8" cy="8" rx="3.200" ry="7" strokeWidth="1.200" /><path d="M1 5.500h14M1 10.500h14" strokeWidth="1.200" /><circle cx="12.500" cy="12.500" r="3.500" fill="#152d42" strokeWidth="1.200" /><path d="M10 10l5 5" strokeWidth="1.200" /></Svg></button>
          <button className="flex w-5 justify-center" aria-label="Volume"><Svg w={17} h={14}><path d="M1 5v4h2.500L7 12.500v-11L3.500 5zM9 5c1 1.300 1 2.700 0 4M11 3.500c2 2.300 2 4.700 0 7M13.500 2c3 3.300 3 6.700 0 10" strokeWidth="1.200" /></Svg></button>
        </div>
        <button className="ml-[11px] w-4 text-center text-[14px] font-['Noto_Sans','DejaVu_Sans',sans-serif]" aria-label="Input language" lang="ar">ع</button>
        <button className="ml-[9px] flex w-[66px] flex-col items-center text-[11px] leading-[18px] whitespace-nowrap">
          <span>7:00 PM</span>
          <span>4/29/2025</span>
        </button>
        <button className="relative ml-2.5 flex h-10 w-9 items-center pl-0.5" aria-label="Notifications">
          <Svg w={17} h={16}><path d="M0 0h16v12H8l-4 4v-4H0z" fill="#fff" stroke="none" /><path d="M3 3h10M3 6h10M3 9h7" stroke="#152d42" strokeWidth="1.200" /></Svg>
          <span className="absolute right-2.5 bottom-1 flex size-4 items-center justify-center rounded-full bg-[#12579e] text-[11px] font-bold">4</span>
        </button>
        <span className="mr-1 h-10 w-px bg-[#6d7f8d]" />
      </div>
    </footer>
  );
}

export default function App() {
  return (
    <div className={`relative flex h-screen flex-col overflow-hidden bg-[#363636] ${FONT}`}>
      <TitleBar />
      <Ribbon />
      <div className="flex min-h-0 flex-1">
        <PagesPanel />
        <Workspace />
        <div className="flex w-[39px] shrink-0 justify-between bg-[#363636] pl-1.5">
          <button className="h-32 pt-[5px] text-left text-base leading-6 text-[#ececec] [writing-mode:vertical-rl]">Property ove...</button>
          <div className="mt-[3px] h-[113px] w-1.5 bg-[#484848]" />
        </div>
      </div>
      <Taskbar />
      <div className="pointer-events-none absolute bottom-[22px] left-[845px] h-[35px] w-[232px] overflow-hidden" aria-hidden="true">
        <span className="absolute right-0 bottom-[-12px] text-[68px] leading-[68px] font-bold whitespace-nowrap text-white/35 font-['DejaVu_Sans',sans-serif]" lang="ar">خمسات</span>
      </div>
    </div>
  );
}
